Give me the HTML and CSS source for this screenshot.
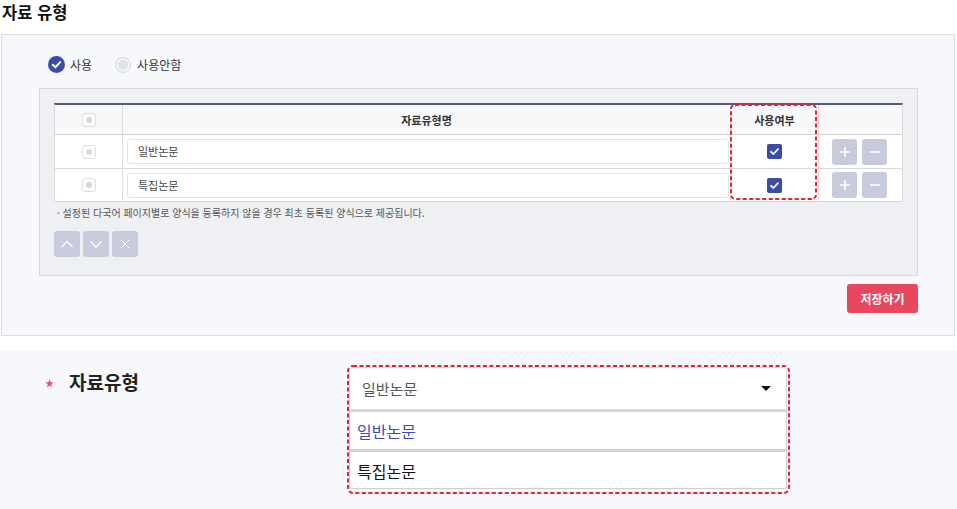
FILE: index.html
```html
<!DOCTYPE html>
<html lang="ko">
<head>
<meta charset="utf-8">
<title>자료 유형</title>
<link rel="stylesheet" href="styles.css">
</head>
<body>
<h2 class="title">자료 유형</h2>
<section class="panel">
  <div class="radios">
    <label class="radio"><span class="rdot on"><svg width="17" height="17" viewBox="0 0 17 17"><circle cx="8.5" cy="8.5" r="8.5" fill="#3a4ca8"/><path d="M4.8 8.8 L7.4 11.3 L12.2 6.1" fill="none" stroke="#fff" stroke-width="2" stroke-linecap="round" stroke-linejoin="round"/></svg></span>사용</label>
    <label class="radio"><span class="rdot off"></span>사용안함</label>
  </div>
  <div class="box">
    <div class="tablewrap">
      <div class="grid">
        <div class="row head">
          <div class="cell c1"><span class="cb"></span></div>
          <div class="cell c2">자료유형명</div>
          <div class="cell c3">사용여부</div>
          <div class="cell c4"></div>
        </div>
        <div class="row r1">
          <div class="cell c1"><span class="cb"></span></div>
          <div class="cell c2"><div class="inp">일반논문</div></div>
          <div class="cell c3"><span class="chk"><svg width="15" height="15" viewBox="0 0 15 15"><path d="M4 7.8 L6.4 10 L11 5.2" fill="none" stroke="#fff" stroke-width="1.8" stroke-linecap="round" stroke-linejoin="round"/></svg></span></div>
          <div class="cell c4"><span class="sq"><svg width="12" height="12" viewBox="0 0 12 12"><path d="M6 1 V11 M1 6 H11" stroke="#fff" stroke-width="1.6"/></svg></span><span class="sq"><svg width="12" height="12" viewBox="0 0 12 12"><path d="M1 6 H11" stroke="#fff" stroke-width="1.6"/></svg></span></div>
        </div>
        <div class="row r2">
          <div class="cell c1"><span class="cb"></span></div>
          <div class="cell c2"><div class="inp">특집논문</div></div>
          <div class="cell c3"><span class="chk"><svg width="15" height="15" viewBox="0 0 15 15"><path d="M4 7.8 L6.4 10 L11 5.2" fill="none" stroke="#fff" stroke-width="1.8" stroke-linecap="round" stroke-linejoin="round"/></svg></span></div>
          <div class="cell c4"><span class="sq"><svg width="12" height="12" viewBox="0 0 12 12"><path d="M6 1 V11 M1 6 H11" stroke="#fff" stroke-width="1.6"/></svg></span><span class="sq"><svg width="12" height="12" viewBox="0 0 12 12"><path d="M1 6 H11" stroke="#fff" stroke-width="1.6"/></svg></span></div>
        </div>
      </div>
      <svg class="hl" width="87" height="96" viewBox="0 0 87 96"><rect x="1" y="1" width="85" height="94" rx="4" fill="none" stroke="#e8202e" stroke-width="2" stroke-dasharray="4 2.5"/></svg>
    </div>
    <p class="note">· 설정된 다국어 페이지별로 양식을 등록하지 않을 경우 최초 등록된 양식으로 제공됩니다.</p>
    <div class="moves">
      <span class="mv"><svg width="14" height="14" viewBox="0 0 14 14"><path d="M1.5 10 L7 4.5 L12.5 10" fill="none" stroke="#fff" stroke-width="1.3"/></svg></span>
      <span class="mv"><svg width="14" height="14" viewBox="0 0 14 14"><path d="M1.5 4.5 L7 10 L12.5 4.5" fill="none" stroke="#fff" stroke-width="1.3"/></svg></span>
      <span class="mv"><svg width="14" height="14" viewBox="0 0 14 14"><path d="M2.5 2.5 L11.5 11.5 M11.5 2.5 L2.5 11.5" fill="none" stroke="#fff" stroke-width="1"/></svg></span>
    </div>
  </div>
  <div class="actions"><button class="save" type="button">저장하기</button></div>
</section>
<section class="field">
  <div class="label"><span class="star"><svg width="9" height="9" viewBox="0 0 10 10"><path d="M5 0.5 L6.2 3.6 L9.5 3.7 L6.9 5.8 L7.8 9.2 L5 7.3 L2.2 9.2 L3.1 5.8 L0.5 3.7 L3.8 3.6 Z" fill="#e8505f"/></svg></span>자료유형</div>
  <div class="dd">
    <div class="sel">일반논문<span class="caret"></span></div>
    <div class="opt cur">일반논문</div>
    <div class="opt">특집논문</div>
    <svg class="ddhl" width="443" height="129" viewBox="0 0 443 129"><rect x="1" y="1" width="441" height="127" rx="5" fill="none" stroke="#e8202e" stroke-width="2" stroke-dasharray="4 2.5"/></svg>
  </div>
</section>
</body>
</html>
```
FILE: styles.css
```css
* { box-sizing: border-box; }
html, body { margin: 0; padding: 0; background: #fff; }
body {
  font-family: "Noto Sans CJK KR", "Noto Sans", sans-serif;
  color: #222;
  width: 957px;
  height: 509px;
  overflow: hidden;
}
.title {
  margin: 0;
  padding-left: 2px;
  height: 34px;
  font-size: 16.5px;
  line-height: 24px;
  font-weight: 700;
  color: #111;
}
.panel {
  margin-left: 1px;
  width: 954px;
  height: 302px;
  border: 1px solid #dcdde0;
  background: #f7f8fb;
  padding: 21px 36px 0 37px;
}
.radios {
  display: flex;
  align-items: center;
  height: 17px;
  padding-left: 9px;
}
.radio {
  display: flex;
  align-items: center;
  font-size: 12px;
  line-height: 17px;
  color: #333;
}
.radio + .radio { margin-left: 23px; }
.rdot {
  display: inline-block;
  width: 17px;
  height: 17px;
  margin-right: 5px;
}
.rdot svg { display: block; }
.rdot.off {
  width: 16px;
  height: 16px;
  margin-right: 6px;
  border-radius: 50%;
  border: 1px solid #d9dbe0;
  background: #dfe1e8;
  box-shadow: inset 0 0 0 2px #f4f5f8;
}
.box {
  margin-top: 15px;
  height: 188px;
  border: 1px solid #d6d8dd;
  background: #eff0f4;
  padding: 14px 14px 0 14px;
}
.tablewrap { position: relative; }
.grid {
  border-top: 2px solid #525b79;
  border-left: 1px solid #dadada;
  border-right: 1px solid #dadada;
  background: #fff;
}
.row {
  display: grid;
  grid-template-columns: 67px 608px 88px 1fr;
  border-bottom: 1px solid #d8d8d8;
}
.row.head { height: 30px; background: #f8f8fa; border-bottom-color: #cfcfcf; }
.row.r1 { height: 34px; }
.row.r2 { height: 33px; }
.cell {
  display: flex;
  align-items: center;
  justify-content: center;
  border-left: 1px solid #dedede;
  font-size: 11px;
  color: #333;
}
.cell.c1 { border-left: 0; }
.head .cell { font-weight: 700; color: #333; font-size: 11px; }
.cb {
  width: 14px;
  height: 14px;
  border: 1px solid #dcdcdc;
  border-radius: 3px;
  background: #fff;
  display: flex;
  align-items: center;
  justify-content: center;
}
.cb::after {
  content: "";
  width: 6px;
  height: 6px;
  border-radius: 50%;
  background: #d4d7e1;
}
.row .c2 { justify-content: stretch; padding: 0 1px 0 4px; }
.head .c2 { justify-content: center; padding: 0; }
.inp {
  width: 100%;
  height: 25px;
  border: 1px solid #e2e2e2;
  border-radius: 3px;
  background: #fff;
  padding-left: 10px;
  font-size: 11px;
  line-height: 23px;
  color: #444;
}
.chk {
  width: 15px;
  height: 15px;
  border-radius: 2px;
  background: #3a4ca8;
  display: block;
}
.chk svg { display: block; }
.row .c4 { justify-content: flex-start; padding-left: 13px; gap: 5px; }
.sq {
  width: 25px;
  height: 26px;
  border-radius: 3px;
  background: #c7cbdc;
  display: flex;
  align-items: center;
  justify-content: center;
}
.sq svg { display: block; }
.hl {
  position: absolute;
  left: 676px;
  top: 1px;
}
.note {
  margin: 3px 0 0 3px;
  font-size: 10px;
  line-height: 16px;
  color: #555;
}
.moves {
  margin-top: 10px;
  display: flex;
  gap: 3px;
}
.mv {
  width: 26px;
  height: 26px;
  border-radius: 3px;
  background: #c7cbdc;
  display: flex;
  align-items: center;
  justify-content: center;
}
.mv svg { display: block; }
.actions {
  display: flex;
  justify-content: flex-end;
  margin-top: 8px;
}
.save {
  width: 71px;
  height: 29px;
  border: 0;
  border-radius: 3px;
  background: #e8485f;
  color: #fff;
  font-family: "Noto Sans CJK KR", sans-serif;
  font-size: 12px;
  font-weight: 700;
  padding: 0;
}
.field {
  margin-top: 15px;
  height: 158px;
  background: #f7f8fb;
  display: flex;
  align-items: flex-start;
  padding-top: 14px;
}
.label {
  display: flex;
  align-items: center;
  margin-left: 45px;
  margin-top: 6px;
  width: 302px;
  font-size: 19px;
  font-weight: 700;
  line-height: 22px;
  color: #222;
}
.star {
  display: block;
  width: 9px;
  height: 9px;
  margin-right: 15px;
  position: relative;
  top: 1px;
}
.star svg { display: block; }
.dd {
  position: relative;
  width: 443px;
  height: 129px;
  padding: 2px 3px 2px 2px;
}
.sel {
  height: 43px;
  background: #fff;
  border: 1px solid #dcdcdc;
  border-radius: 4px 4px 0 0;
  padding-left: 12px;
  font-size: 15px;
  line-height: 41px;
  color: #555;
  display: flex;
  align-items: center;
  box-shadow: 0 1px 2px rgba(0,0,0,0.06);
}
.caret {
  margin-left: auto;
  margin-right: 15px;
  width: 0;
  height: 0;
  border-left: 5px solid transparent;
  border-right: 5px solid transparent;
  border-top: 5px solid #111;
}
.opt {
  height: 40px;
  background: #fff;
  border: 1px solid #cfcfcf;
  border-top: 2px solid #d5d5d5;
  padding-left: 7px;
  font-size: 16px;
  line-height: 38px;
  color: #111;
}
.opt + .opt { height: 39px; border-radius: 0 0 3px 3px; }
.opt.cur { color: #3b4bb5; }
.ddhl {
  position: absolute;
  left: 0;
  top: 0;
}
```
